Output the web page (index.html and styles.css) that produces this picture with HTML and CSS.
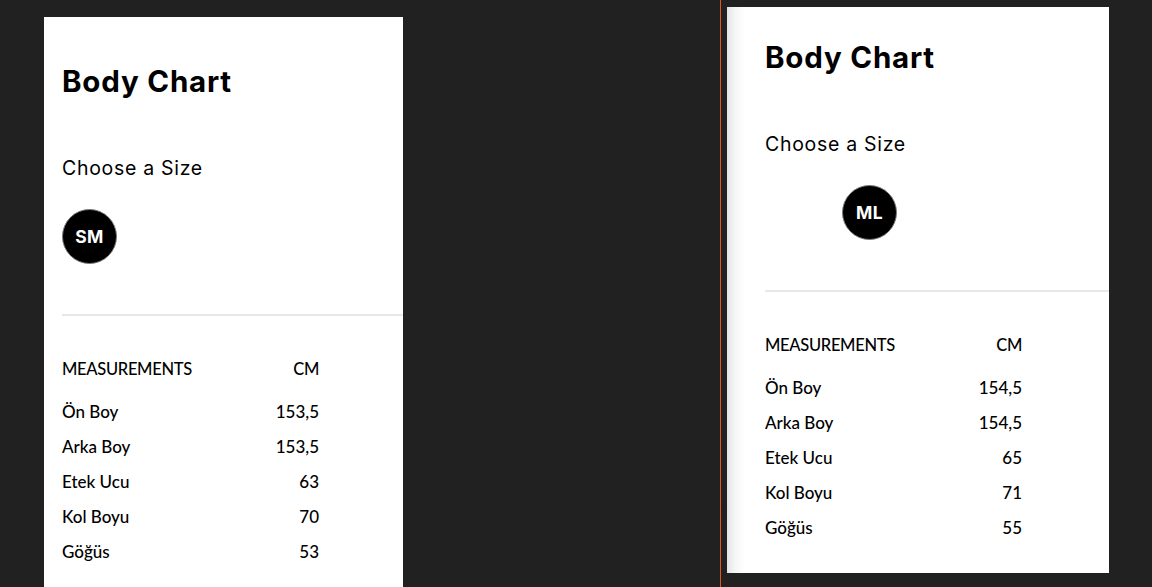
FILE: index.html
```html
<!DOCTYPE html>
<html lang="tr">
<head>
<meta charset="utf-8">
<title>Body Chart</title>
<link rel="stylesheet" href="styles.css">
</head>
<body>
<div class="stage">
  <section class="panel panel-left">
    <h1 class="title">Body Chart</h1>
    <h2 class="subtitle">Choose a Size</h2>
    <div class="sizes">
      <span class="size size-active">SM</span>
      <span class="size size-ghost"></span>
    </div>
    <hr class="rule">
    <div class="chart">
      <div class="chart-head">MEASUREMENTS</div><div class="chart-head num">CM</div>
      <div class="cell">Ön Boy</div><div class="cell num">153,5</div>
      <div class="cell">Arka Boy</div><div class="cell num">153,5</div>
      <div class="cell">Etek Ucu</div><div class="cell num">63</div>
      <div class="cell">Kol Boyu</div><div class="cell num">70</div>
      <div class="cell">Göğüs</div><div class="cell num">53</div>
    </div>
  </section>
  <div class="accent-line"></div>
  <section class="panel panel-right">
    <h1 class="title">Body Chart</h1>
    <h2 class="subtitle">Choose a Size</h2>
    <div class="sizes">
      <span class="size size-ghost"></span>
      <span class="size size-active">ML</span>
    </div>
    <hr class="rule">
    <div class="chart">
      <div class="chart-head">MEASUREMENTS</div><div class="chart-head num">CM</div>
      <div class="cell">Ön Boy</div><div class="cell num">154,5</div>
      <div class="cell">Arka Boy</div><div class="cell num">154,5</div>
      <div class="cell">Etek Ucu</div><div class="cell num">65</div>
      <div class="cell">Kol Boyu</div><div class="cell num">71</div>
      <div class="cell">Göğüs</div><div class="cell num">55</div>
    </div>
  </section>
</div>
</body>
</html>
```

FILE: styles.css
```css
html, body {
  margin: 0;
  padding: 0;
  background: #212121;
}

.stage {
  display: flex;
  align-items: flex-start;
  height: 587px;
  overflow: hidden;
}

.panel {
  background: #ffffff;
  box-sizing: border-box;
  padding-left: 18px;
  overflow: hidden;
  flex: none;
}

.panel-left {
  margin-left: 44px;
  margin-top: 17px;
  width: 359px;
  height: 600px;
  padding-top: 47px;
}

.accent-line {
  flex: none;
  width: 1px;
  align-self: stretch;
  background: #e0541f;
  margin-left: 317px;
}

.panel-right {
  margin-left: 6px;
  margin-top: 7px;
  width: 382px;
  height: 566px;
  padding-top: 33px;
  padding-left: 38px;
  background: linear-gradient(to right, #e4e4e4 0px, #f6f6f6 8px, #ffffff 18px);
}

.title {
  margin: 0;
  font-family: "Inter", "Open Sans", sans-serif;
  font-weight: 700;
  font-size: 29.5px;
  line-height: 34px;
  letter-spacing: 0.8px;
  color: #000;
}

.subtitle {
  margin: 58px 0 0;
  font-family: "Inter", "Open Sans", sans-serif;
  font-weight: 400;
  font-size: 19.5px;
  line-height: 24px;
  letter-spacing: 0.7px;
  color: #000;
}

.sizes {
  display: flex;
  gap: 22px;
  margin-top: 29px;
}

.size {
  width: 55px;
  height: 55px;
  border-radius: 50%;
  box-sizing: border-box;
  display: flex;
  align-items: center;
  justify-content: center;
  font-family: "Inter", "Open Sans", sans-serif;
  font-weight: 700;
  font-size: 17.5px;
  letter-spacing: 0.3px;
  color: #fff;
}

.size-active {
  background: #000;
  border: 1px solid #7a7a7a;
}

.size-ghost {
  background: #fff;
}

.rule {
  margin: 50px 0 0;
  border: 0;
  height: 2px;
  background: #e8e8e8;
}

.chart {
  display: grid;
  grid-template-columns: 1fr auto;
  width: 257px;
  margin-top: 36px;
  font-family: "Lato", "Liberation Sans", sans-serif;
  font-weight: 500;
  font-size: 17px;
  color: #000;
}

.chart-head {
  line-height: 35px;
  padding-bottom: 7px;
  font-size: 16.5px;
  letter-spacing: -0.3px;
}

.cell {
  line-height: 35px;
}

.num {
  text-align: right;
}
```
